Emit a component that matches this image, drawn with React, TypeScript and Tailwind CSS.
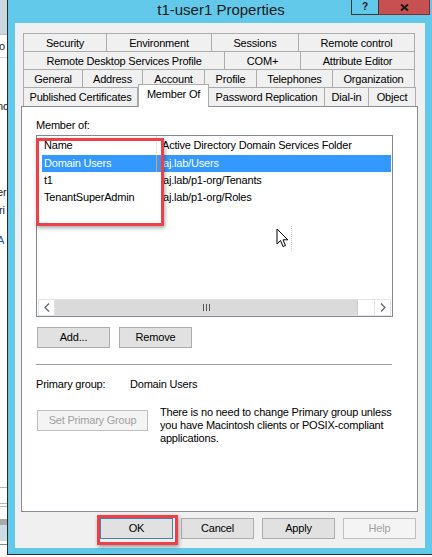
import React from "react";

type Tab = { label: string; w: string; active?: boolean };

const tabRows: Tab[][] = [
  [
    { label: "Security", w: "w-[84px]" },
    { label: "Environment", w: "w-[105px]" },
    { label: "Sessions", w: "w-[87px]" },
    { label: "Remote control", w: "w-[116px]" },
  ],
  [
    { label: "Remote Desktop Services Profile", w: "w-[202px]" },
    { label: "COM+", w: "w-[76px]" },
    { label: "Attribute Editor", w: "w-[114px]" },
  ],
  [
    { label: "General", w: "w-[60px]" },
    { label: "Address", w: "w-[60px]" },
    { label: "Account", w: "w-[62px]" },
    { label: "Profile", w: "w-[52px]" },
    { label: "Telephones", w: "w-[76px]" },
    { label: "Organization", w: "w-[82px]" },
  ],
  [
    { label: "Published Certificates", w: "w-[115px]" },
    { label: "Member Of", w: "w-[71px]", active: true },
    { label: "Password Replication", w: "w-[116px]" },
    { label: "Dial-in", w: "w-[44px]" },
    { label: "Object", w: "w-[47px]" },
  ],
];

const groups = [
  { name: "Domain Users", folder: "aj.lab/Users", selected: true },
  { name: "t1", folder: "aj.lab/p1-org/Tenants" },
  { name: "TenantSuperAdmin", folder: "aj.lab/p1-org/Roles" },
];

function Chevron({ dir }: { dir: "left" | "right" }) {
  return (
    <svg width="6" height="9" viewBox="0 0 6 9">
      <polyline
        points={dir === "left" ? "5,0.5 1,4.5 5,8.5" : "1,0.5 5,4.5 1,8.5"}
        fill="none"
        stroke="#606060"
        strokeWidth="1.2"
      />
    </svg>
  );
}

function WinButton({ label, disabled, isDefault }: { label: string; disabled?: boolean; isDefault?: boolean }) {
  return (
    <div
      className={
        disabled
          ? "w-[73px] h-[21px] flex items-center justify-center border border-[#bfbfbf] bg-[#f4f4f4] text-[#a0a0a0]"
          : isDefault
          ? "w-[73px] h-[21px] flex items-center justify-center border border-[#4a7eab] bg-[#e1e1e1] text-black"
          : "w-[73px] h-[21px] flex items-center justify-center border border-[#adadad] bg-[#e1e1e1] text-black"
      }
    >
      {label}
    </div>
  );
}

export default function App() {
  return (
    <div
      className="w-[432px] h-[557px] flex overflow-hidden bg-white text-[11px] tracking-[-0.2px] text-black"
      style={{ fontFamily: '"Liberation Sans", Arial, sans-serif' }}
    >
      {/* window behind, left edge */}
      <div className="w-[7px] shrink-0 flex flex-col overflow-hidden text-[#222]">
        <div className="h-[35px] bg-[#ccd8e0] border-b border-[#b5c0c7]" />
        <div className="h-[14px] mt-[4px] leading-[14px] -ml-[1px]">o</div>
        <div className="h-px mt-[4px] bg-[#d0d0d0]" />
        <div className="h-[14px] mt-[41px] leading-[14px] -ml-[3px]">nd</div>
        <div className="h-[14px] mt-[72px] leading-[14px] -ml-[3px]">er</div>
        <div className="h-[14px] mt-[4px] leading-[14px] -ml-[1px]">ri</div>
        <div className="h-[14px] mt-[2px] leading-[14px] -ml-[3px] text-[#1e5aa8]">: A</div>
        <div className="h-px mt-[254px] bg-[#b8b8b8]" />
        <div className="h-px mt-[15px] bg-[#b8b8b8]" />
        <div className="h-px mt-[2px] bg-[#b8b8b8]" />
        <div className="h-[6px] mt-[12px] bg-[#a9a9a9]" />
        <div className="h-[16px] bg-[#c9dde2]" />
        <div className="h-px mt-[3px] bg-[#8a8a8a]" />
      </div>

      {/* properties window */}
      <div className="w-[425px] h-[555px] shrink-0 flex flex-col border-l border-b border-[#2b2b2b] bg-[#62c9ea]">
        <div className="relative h-[23px] shrink-0 flex justify-center pl-[2px]">
          <span className="text-[15px] tracking-normal leading-[20px] text-[#1b1b1b]">t1-user1 Properties</span>
          <div className="absolute top-0 right-[2px] flex">
            <div className="w-[28px] h-[15px] border-l border-b border-r border-[#3a3a3a] flex items-center justify-center">
              <span className="text-[10px] font-bold leading-none text-[#111]">?</span>
            </div>
            <div className="w-[51px] h-[15px] bg-[#c75050] border-b border-r border-[#7a3030] flex items-center justify-center">
              <svg width="9" height="7" viewBox="0 0 9 7">
                <path d="M1 0.5 L8 6.5 M8 0.5 L1 6.5" stroke="#1a1a1a" strokeWidth="2" />
              </svg>
            </div>
          </div>
        </div>

        <div className="flex-1 mx-[7px] mb-[6px] bg-[#f0f0f0] flex flex-col pt-[10px] pl-[6px] pr-[7px]">
          {/* tab strip */}
          <div className="flex flex-col ml-[2px]">
            {tabRows.map((row, ri) => (
              <div key={ri} className={ri === 3 ? "flex h-[19px]" : "flex h-[18px]"}>
                {row.map((t, ti) =>
                  t.active ? (
                    <div
                      key={t.label}
                      className={`${t.w} relative z-10 -mt-[3px] h-[23px] flex justify-center pt-[2px] leading-[14px] bg-white border-l border-t border-r border-[#acacac]`}
                    >
                      {t.label}
                    </div>
                  ) : (
                    <div
                      key={t.label}
                      className={`${t.w} flex items-center justify-center leading-[14px] bg-[#f0f0f0] border-t border-r border-[#acacac] ${
                        ti === 0 ? "border-l" : ""
                      }`}
                    >
                      {t.label}
                    </div>
                  )
                )}
              </div>
            ))}
          </div>

          {/* tab page */}
          <div className="h-[406px] border border-[#898c95] bg-white flex flex-col pl-[14px] pt-[11px]">
            <div className="h-[14px] leading-[14px]">Member of:</div>

            <div className="relative mt-[3px] w-[357px] h-[182px] border border-[#828790] bg-white flex flex-col">
              <div className="h-[18px] flex leading-[18px]">
                <div className="w-[120px] pl-[7px] border-r border-[#e5e5e5]">Name</div>
                <div className="pl-[5px] whitespace-nowrap">Active Directory Domain Services Folder</div>
              </div>
              <div className="mt-px pl-[5px] pr-px flex flex-col">
                {groups.map((g) => (
                  <div
                    key={g.name}
                    className={
                      g.selected
                        ? "h-[17px] flex leading-[17px] bg-[#3399ff] text-white"
                        : "h-[17px] flex leading-[17px]"
                    }
                  >
                    <div className={g.selected ? "w-[115px] pl-[2px] border-r border-[#e8a060]" : "w-[115px] pl-[2px]"}>
                      {g.name}
                    </div>
                    <div className="pl-[6px] whitespace-nowrap">{g.folder}</div>
                  </div>
                ))}
              </div>
              <div className="flex-1" />
              <div className="h-[17px] mx-px flex border border-[#e3e3e3] bg-white">
                <div className="w-[16px] flex items-center justify-center border-r border-[#e3e3e3]">
                  <Chevron dir="left" />
                </div>
                <div className="w-[303px] flex items-center justify-center gap-[2px] bg-[#dadada] border-r border-[#cdcdcd]">
                  <div className="w-px h-[7px] bg-[#555]" />
                  <div className="w-px h-[7px] bg-[#555]" />
                  <div className="w-px h-[7px] bg-[#555]" />
                </div>
                <div className="flex-1" />
                <div className="w-[16px] flex items-center justify-center border-l border-[#e3e3e3]">
                  <Chevron dir="right" />
                </div>
              </div>

              {/* highlight box */}
              <div className="absolute -left-[1px] top-[2px] w-[128px] h-[88px] border-[3px] border-[#ec4148] shadow-[1px_2px_4px_rgba(0,0,0,0.35)]" />
              {/* mouse pointer */}
              <svg className="absolute left-[239px] top-[92px]" width="13" height="20" viewBox="0 0 13 20">
                <path
                  d="M1 1 L1 16 L4.5 12.5 L7 18.5 L9.5 17.5 L7 11.8 L11.8 11.8 Z"
                  fill="white"
                  stroke="black"
                  strokeWidth="1"
                  strokeLinejoin="round"
                />
              </svg>
              <div className="absolute left-[254px] top-[90px] h-[25px] border-l border-dotted border-[#c8c8c8]" />
            </div>

            <div className="mt-[10px] ml-px flex gap-[9px]">
              <WinButton label="Add..." />
              <WinButton label="Remove" />
            </div>

            <div className="mt-[16px] w-[356px] h-px bg-[#a0a0a0]" />

            <div className="mt-[12px] flex leading-[14px]">
              <div className="w-[94px]">Primary group:</div>
              <div>Domain Users</div>
            </div>

            <div className="mt-[19px] ml-px flex items-start">
              <div className="w-[111px] h-[21px] flex items-center justify-center border border-[#bfbfbf] bg-[#f4f4f4] text-[#a0a0a0]">
                Set Primary Group
              </div>
              <p className="ml-[12px] -mt-[4px] leading-[13px]">
                There is no need to change Primary group unless
                <br />
                you have Macintosh clients or POSIX-compliant
                <br />
                applications.
              </p>
            </div>
          </div>

          {/* dialog buttons */}
          <div className="mt-[6px] flex justify-end gap-[8px] pr-[2px]">
            <div className="relative">
              <WinButton label="OK" isDefault />
              <div className="absolute -left-[3px] -top-[3px] w-[81px] h-[30px] border-[3px] border-[#ec4148] shadow-[1px_2px_4px_rgba(0,0,0,0.35)]" />
            </div>
            <WinButton label="Cancel" />
            <WinButton label="Apply" />
            <WinButton label="Help" disabled />
          </div>
        </div>
      </div>
    </div>
  );
}
